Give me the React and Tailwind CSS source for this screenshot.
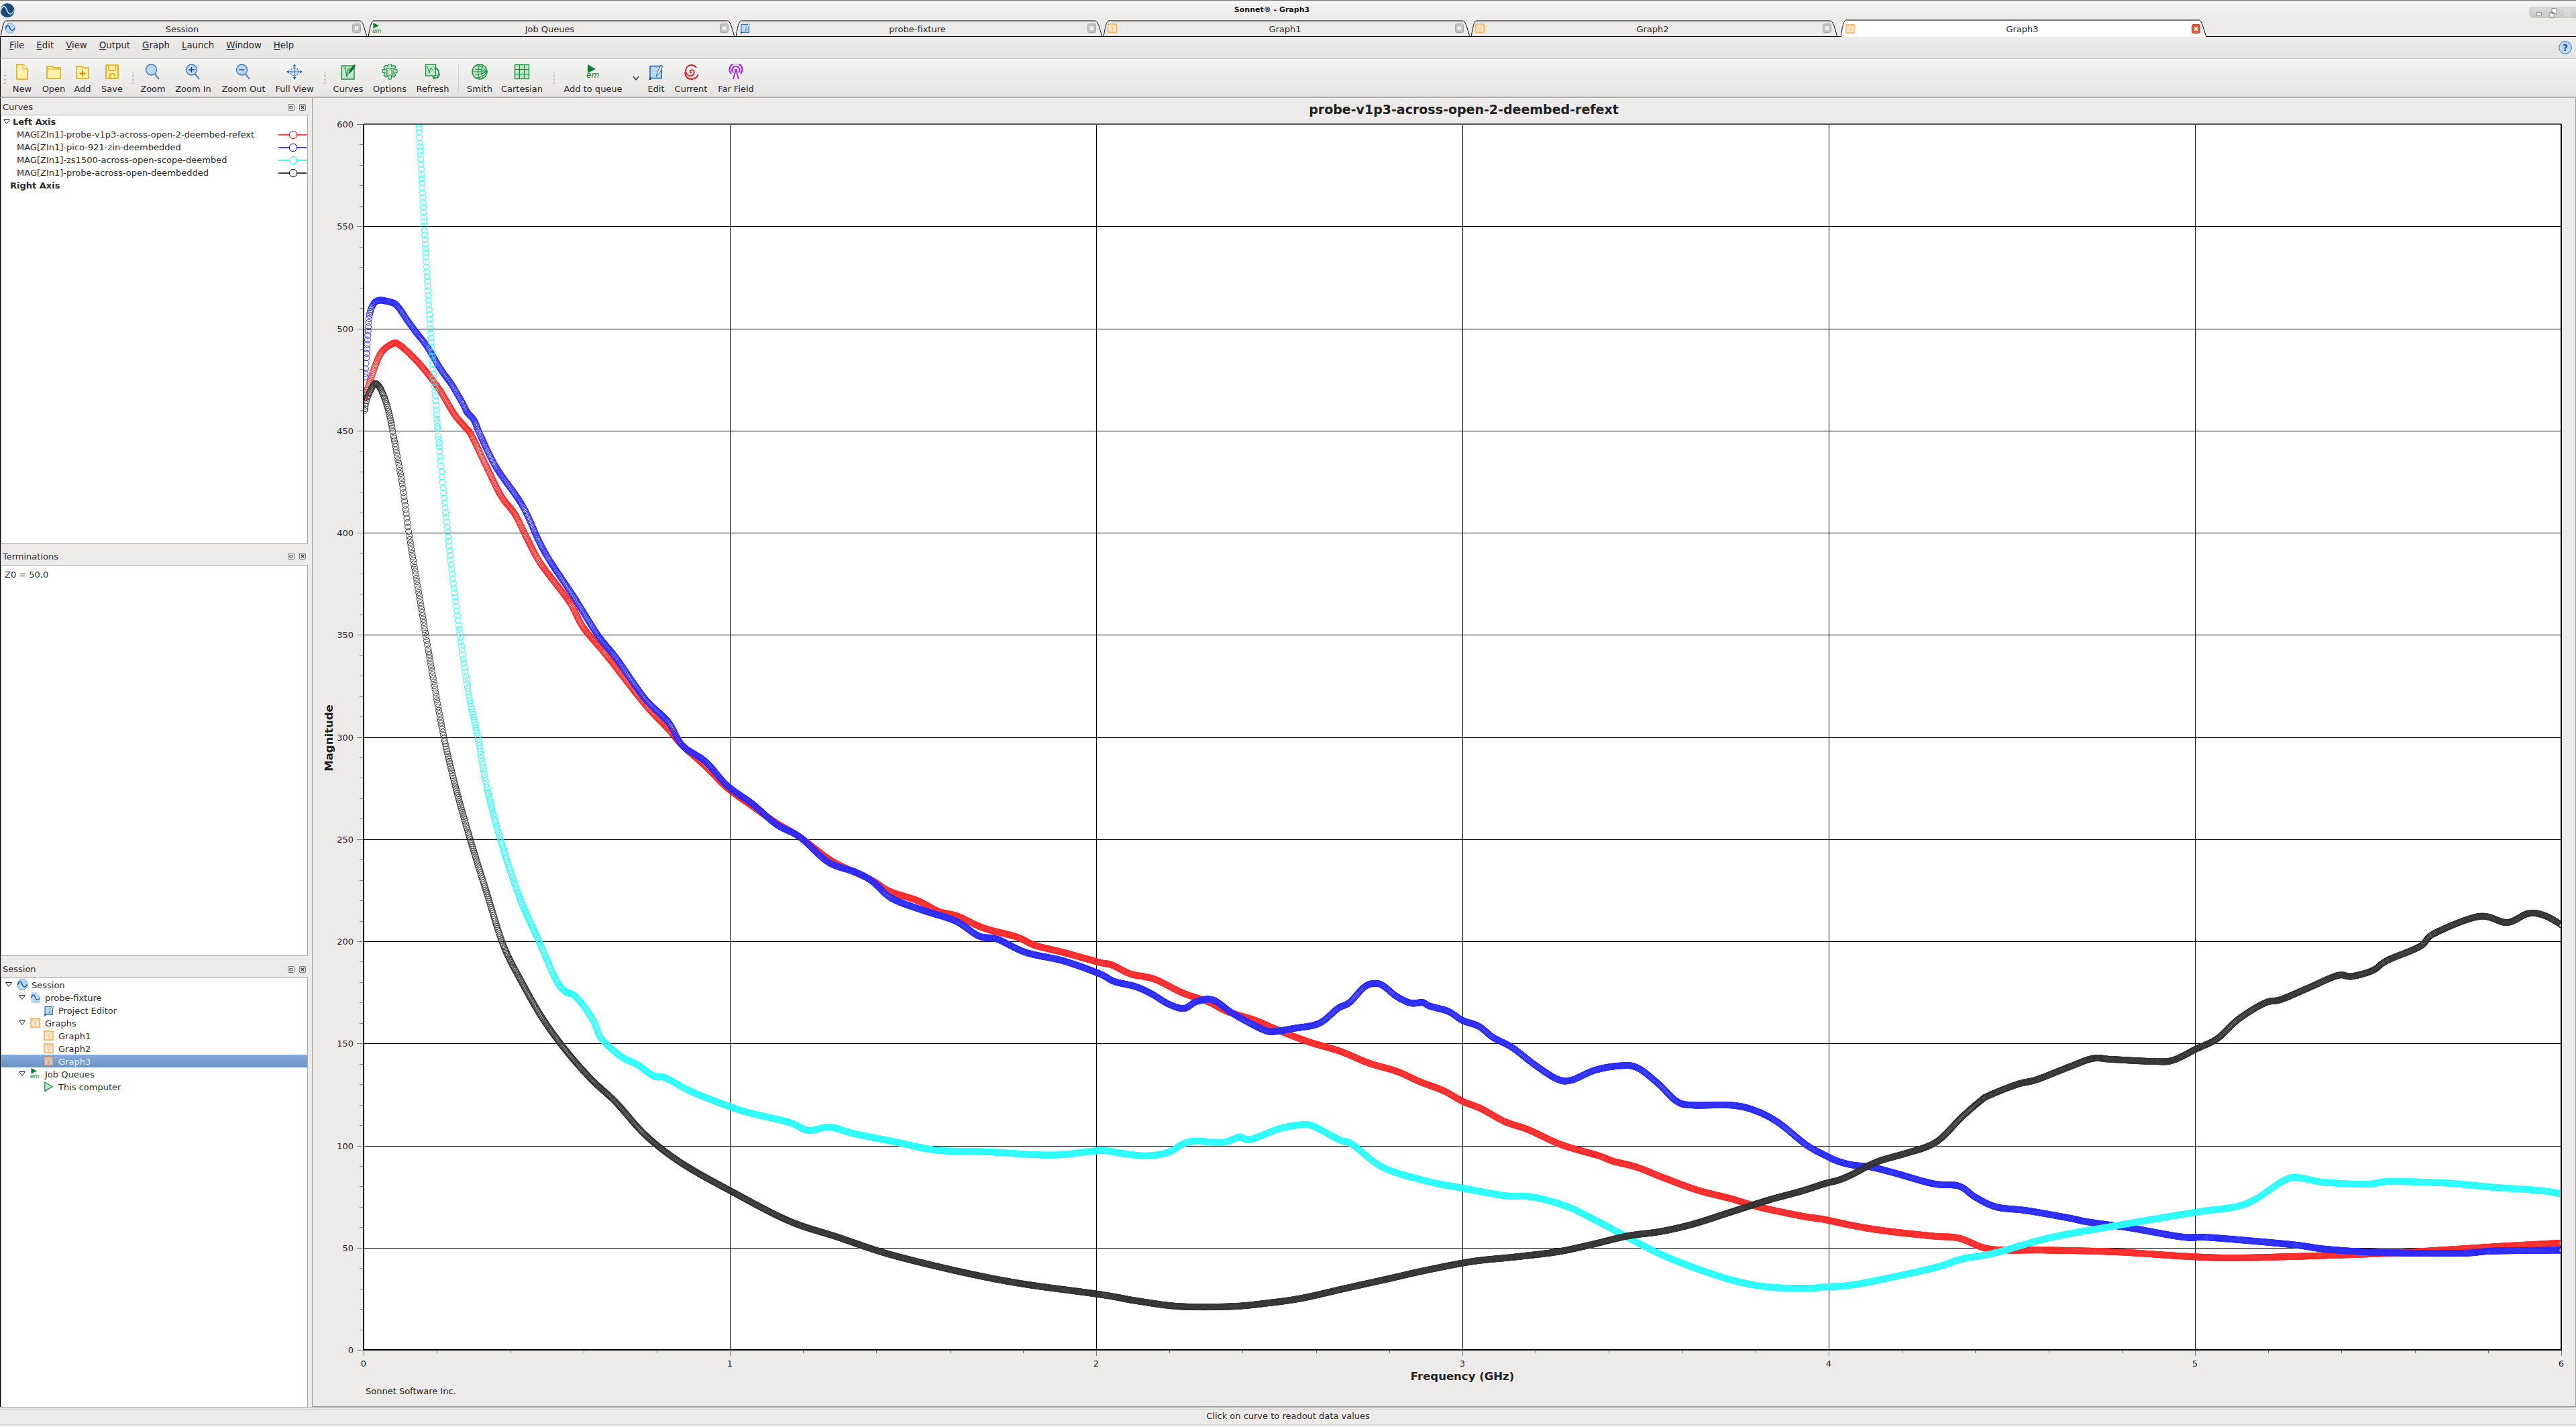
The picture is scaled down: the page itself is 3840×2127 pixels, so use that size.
import React from "react";

const z7 = (a) => a.map(([X, Y]) => [460 + X / 3, 150 + Y / 3]);
const z10 = (a) => a.map(([X, Y]) => [540 + X / 1.4255, 420 + Y / 1.4255]);
const z11 = (a) => a.map(([X, Y]) => [1640 + X / 1.4255, 1300 + Y / 2.24]);
const z12 = (a) => a.map(([X, Y]) => [2720 + X / 1.4255, 1300 + Y / 2.24]);
const ov = (a) => a.map(([X, Y]) => [X * 2.449, Y * 2.449]);

const RED = [
  ...z7([[247,1335],[270,1270],[300,1180],[330,1120],[380,1085],[410,1095],[460,1140],[520,1205],[590,1300],[650,1400],[700,1460],[730,1500]]),
  ...z10([[265,395],[295,455],[325,495],[350,545],[380,600],[440,680],[470,735],[520,795],[600,897],[650,950],[680,985],[730,1030],[775,1075],[830,1115],[880,1150],[930,1180],[1000,1232],[1080,1270],[1120,1295],[1180,1315],[1225,1338],[1265,1348],[1320,1373],[1390,1392],[1430,1410],[1490,1425],[1566,1446]]),
  ...z11([[25,310],[65,340],[115,357],[175,403],[230,433],[270,465],[330,495],[370,522],[440,565],[510,598],[570,637],[630,665],[680,700],[730,730],[770,765],[810,790],[860,833],[910,860],[980,910],[1060,947],[1090,965],[1140,985],[1200,1022],[1270,1062],[1340,1090],[1400,1118],[1490,1148]]),
  ...z12([[0,1160],[60,1180],[130,1198],[230,1215],[285,1222],[340,1255],[390,1262],[470,1262],[620,1268],[760,1282],[860,1288],[980,1284],[1060,1280],[1200,1272],[1350,1258],[1450,1248],[1568,1238]]),
];
const BLUE = [
  ...z7([[252,1235],[258,1150],[265,1050],[272,960],[290,910],[315,893],[350,897],[385,908],[410,935],[440,980],[480,1035],[530,1100],[590,1200],[640,1270],[690,1355],[710,1395],[740,1430],[770,1500]]),
  ...z10([[285,395],[340,475],[375,550],[400,595],[450,670],[500,750],[540,800],[600,885],[650,935],[680,985],[730,1020],[775,1070],[830,1110],[880,1153],[930,1180],[990,1233],[1050,1255],[1085,1275],[1125,1310],[1190,1335],[1260,1358],[1310,1390],[1350,1397],[1410,1425],[1490,1443],[1566,1470]]),
  ...z11([[30,365],[75,382],[110,407],[145,440],[178,455],[205,432],[240,427],[285,475],[345,525],[370,532],[410,522],[465,505],[505,455],[530,435],[560,385],[580,372],[600,378],[630,415],[660,437],[685,435],[700,447],[740,465],[770,495],[805,515],[835,552],[875,585],[925,645],[970,690],[1000,695],[1050,662],[1100,647],[1140,652],[1185,705],[1225,765],[1260,778],[1340,778],[1390,795],[1440,835],[1500,910],[1540,945]]),
  ...z12([[28,965],[60,978],[100,985],[150,1005],[230,1040],[285,1048],[320,1085],[365,1118],[430,1130],[520,1155],[560,1168],[650,1188],[760,1218],[820,1220],[990,1243],[1060,1258],[1150,1268],[1250,1272],[1360,1272],[1420,1265],[1568,1262]]),
];
const CYAN = [
  ...z7([[491,60],[493,105],[497,190],[505,330],[515,520],[525,700],[535,870],[545,1020],[555,1180],[565,1300],[575,1440],[580,1500]]),
  ...z10([[175,470],[190,610],[205,730],[225,870],[245,965],[265,1075],[295,1190],[335,1310],[375,1400],[410,1480],[430,1507],[455,1520],[490,1568]]),
  ...ov([[366,632],[378,643],[388,648],[398,655],[405,656],[420,664],[440,672],[455,677],[480,683],[492,688],[505,686],[520,690],[545,695],[570,700],[600,701],[640,703]]),
  ...z11([[0,930],[50,940],[100,947],[145,935],[190,900],[260,902],[295,885],[320,892],[380,857],[430,843],[455,850],[510,895],[535,908],[600,985],[690,1030],[770,1055],[860,1080],[920,1085],[990,1115],[1050,1160],[1110,1210],[1190,1275],[1270,1325],[1350,1365],[1420,1385],[1500,1390]]),
  ...z12([[0,1385],[60,1378],[150,1350],[240,1318],[290,1292],[360,1272],[480,1220],[620,1180],[790,1135],[870,1118],[915,1092],[975,1030],[1005,1020],[1060,1035],[1150,1042],[1200,1033],[1320,1038],[1420,1052],[1520,1063],[1568,1075]]),
];
const BLACK = [
  ...z7([[250,1385],[262,1330],[285,1280],[300,1265],[320,1285],[345,1345],[365,1420],[380,1500]]),
  ...z10([[85,430],[100,540],[120,660],[140,780],[170,950],[195,1060],[225,1170],[265,1300],[300,1410],[340,1490],[385,1568]]),
  ...ov([[345,640],[360,657],[375,671],[393,691],[415,708],[445,725],[480,743],[510,753],[540,763],[580,773],[620,781]]),
  ...z11([[0,1410],[80,1432],[170,1450],[280,1450],[360,1438],[430,1422],[520,1390],[620,1355],[690,1330],[790,1300],[880,1285],[970,1268],[1040,1245],[1120,1215],[1190,1200],[1260,1175],[1340,1135],[1420,1095],[1490,1065]]),
  ...z12([[0,1040],[30,1028],[60,1008],[110,968],[170,940],[220,915],[250,885],[290,820],[330,765],[350,745],[410,708],[450,693],[520,650],[570,622],[610,625],[700,632],[740,628],[790,590],[835,555],[880,490],[935,437],[970,425],[1030,385],[1090,345],[1120,348],[1165,328],[1195,295],[1265,248],[1295,205],[1390,148],[1450,168],[1495,138],[1530,145],[1568,178]]),
];

const R = 4.5;
function ringPath(pts) {
  const p = [];
  for (const q of pts) if (!p.length || q[0] > p[p.length - 1][0] + 0.5) p.push(q);
  let d = "";
  for (let i = 0; i < p.length - 1; i++) {
    const a = p[Math.max(i - 1, 0)], b = p[i], c = p[i + 1], e = p[Math.min(i + 2, p.length - 1)];
    const dx = c[0] - b[0], len = Math.hypot(dx, c[1] - b[1]);
    const n = Math.max(1, Math.ceil(dx / 0.9), Math.ceil(len / 7.2));
    for (let k = 0; k < n; k++) {
      const t = k / n, t2 = t * t, t3 = t2 * t;
      const f = (j) => 0.5 * (2 * b[j] + (c[j] - a[j]) * t + (2 * a[j] - 5 * b[j] + 4 * c[j] - e[j]) * t2 + (3 * b[j] - a[j] - 3 * c[j] + e[j]) * t3);
      d += `M${(f(0) - R).toFixed(2)} ${f(1).toFixed(2)}a${R} ${R} 0 1 0 ${2 * R} 0a${R} ${R} 0 1 0 ${-2 * R} 0`;
    }
  }
  return d;
}

const CURVES = [
  { color: "#ff2a2a", pts: RED, d: ringPath(RED) },
  { color: "#2a2aff", pts: BLUE, d: ringPath(BLUE) },
  { color: "#2affff", pts: CYAN, d: ringPath(CYAN) },
  { color: "#333333", pts: BLACK, d: ringPath(BLACK) },
];

const X0 = 542, X1 = 3818, Y0 = 2012, Y1 = 185;
const px = (g) => X0 + (g * (X1 - X0)) / 6;
const py = (v) => Y0 - (v * (Y0 - Y1)) / 600;
const crisp = (n) => Math.round(n) + 0.5;

function Chart() {
  const yMinor = Array.from({ length: 61 }, (_, i) => i * 10);
  const xMinor = Array.from({ length: 31 }, (_, i) => i * 0.2);
  return (
    <svg width="3372" height="1951" viewBox="466 146 3372 1951" className="block">
      <text x="2182" y="170" textAnchor="middle" fontWeight="700" fontSize="19" fill="#222">probe-v1p3-across-open-2-deembed-refext</text>
      <rect x={X0} y={Y1} width={X1 - X0} height={Y0 - Y1} fill="#ffffff" />
      {[50,100,150,200,250,300,350,400,450,500,550].map((v) => (
        <line key={v} x1={X0} x2={X1} y1={crisp(py(v))} y2={crisp(py(v))} stroke="#000" strokeWidth="1" />
      ))}
      {[1,2,3,4,5].map((g) => (
        <line key={g} x1={crisp(px(g))} x2={crisp(px(g))} y1={Y1} y2={Y0} stroke="#000" strokeWidth="1" />
      ))}
      <defs>
        <clipPath id="plot"><rect x={X0} y={Y1} width={X1 - X0} height={Y0 - Y1} /></clipPath>
      </defs>
      <g clipPath="url(#plot)">
        {CURVES.map((c) => (
          <g key={c.color}>
            <path d={c.d} fill="none" stroke={c.color} strokeWidth="1" />
            <circle cx={c.pts[c.pts.length - 1][0] - 1} cy={c.pts[c.pts.length - 1][1]} r={R - 0.5} fill="#fff" stroke={c.color} strokeWidth="1" />
          </g>
        ))}
      </g>
      {yMinor.map((v) => {
        const major = v % 50 === 0;
        return <line key={v} x1={X0 - (major ? 10 : 6)} x2={X0} y1={crisp(py(v))} y2={crisp(py(v))} stroke="#777" strokeWidth="1" />;
      })}
      {xMinor.map((g, i) => {
        const major = i % 5 === 0;
        return <line key={i} x1={crisp(px(g))} x2={crisp(px(g))} y1={Y0} y2={Y0 + (major ? 9 : 5)} stroke="#777" strokeWidth="1" />;
      })}
      <line x1={X0} x2={X1} y1={Y1} y2={Y1} stroke="#555" strokeWidth="2" />
      <line x1={X0} x2={X0} y1={Y1} y2={Y0 + 1} stroke="#000" strokeWidth="2" />
      <line x1={X0} x2={X1 + 1} y1={Y0} y2={Y0} stroke="#000" strokeWidth="2" />
      <line x1={X1} x2={X1} y1={Y1} y2={Y0 + 1} stroke="#000" strokeWidth="2" />
      {[0,50,100,150,200,250,300,350,400,450,500,550,600].map((v) => (
        <text key={v} x="527" y={py(v) + 5} textAnchor="end" fontSize="13" fill="#222">{v}</text>
      ))}
      {[0,1,2,3,4,5,6].map((g) => (
        <text key={g} x={px(g)} y="2037" textAnchor="middle" fontSize="13" fill="#222">{g}</text>
      ))}
      <text x="2180" y="2057" textAnchor="middle" fontWeight="700" fontSize="16.5" fill="#222">Frequency (GHz)</text>
      <text x="0" y="0" transform="translate(496 1100) rotate(-90)" textAnchor="middle" fontWeight="700" fontSize="16.5" fill="#222">Magnitude</text>
      <text x="545" y="2078" fontSize="13" fill="#222">Sonnet Software Inc.</text>
    </svg>
  );
}

const Sine = ({ stroke = "#1d4f86", w = 2 }) => <path d="M2 13C5 4 8 4 11 11s6 9 11 1" fill="none" stroke={stroke} strokeWidth={w} />;
const Svg = ({ s = 24, children, vb = "0 0 24 24" }) => <svg width={s} height={s} viewBox={vb} className="block shrink-0">{children}</svg>;

const LogoDark = () => (
  <svg width="22" height="23" viewBox="0 0 24 24" className="block"><circle cx="12" cy="12" r="11.5" fill="#1c4a7a" /><path d="M1 13C4 3 8 3 11 11s7 10 12 1" fill="none" stroke="#e6eef7" strokeWidth="1.6" /></svg>
);
const LogoLight = ({ s = 17 }) => <Svg s={s}><circle cx="12" cy="12" r="11" fill="#b9d7f7" stroke="#5b8fc9" strokeWidth="1.2" /><Sine /></Svg>;
const DocSine = ({ s = 17 }) => <Svg s={s}><path d="M3 1h12l6 6v16H3z" fill="#b9d7f7" stroke="#9dc0e8" /><Sine /></Svg>;
const EmIcon = ({ s = 17 }) => (
  <Svg s={s}>
    <path d="M2 0L14 6L2 12z" fill="#0d7a33" />
    <text x="0" y="20.500" fontSize="12" fontStyle="italic" fill="#0d7a33">em</text>
  </Svg>
);
const PencilBox = ({ s = 17 }) => (
  <Svg s={s}>
    <rect x="3" y="3.5" width="17" height="18" fill="#b9d7f7" stroke="#1f5b9e" strokeWidth="1.5" />
    <path d="M12 19L15 10l4-8 3 1.5-4 9z" fill="#fff" stroke="#1f5b9e" />
    <path d="M3 19v4.5M1 22l2 2 2-2" fill="none" stroke="#222" strokeWidth="1" />
  </Svg>
);
const GraphIcon = ({ s = 17, dim }) => (
  <Svg s={s}>
    <rect x="1.5" y="1.5" width="21" height="21" fill={dim ? "#d9c8b8" : "#ffe9d2"} stroke={dim ? "#c08a5a" : "#ff9c2a"} strokeWidth="2" />
    <path d="M5 5c3 0 4 1 5 3s1 11 2 11 1-9 2-11 2-3 5-3" fill="none" stroke={dim ? "#b89878" : "#ffb469"} strokeWidth="1.5" />
  </Svg>
);
const PlayOutline = ({ s = 17 }) => <Svg s={s}><path d="M3 2L21 12L3 23z" fill="#c4e8cc" stroke="#158a3b" strokeWidth="2" /></Svg>;
const TreeArrow = () => <svg width="10" height="7" viewBox="0 0 10 7" className="block"><path d="M.5.5h9L5 6.5z" fill="#fff" stroke="#222" /></svg>;

const Close = ({ active }) => (
  <svg width="13" height="14" viewBox="0 0 13 14" className="block shrink-0">
    <rect x=".5" y=".5" width="12" height="13" rx="2" fill={active ? "#e05a3c" : "#c2c2c0"} stroke={active ? "#c9402a" : "#a8a8a8"} />
    <path d="M4 4.5l5 5M9 4.5l-5 5" stroke="#fff" strokeWidth="2" />
  </svg>
);

const TABS = [
  { label: "Session", icon: <LogoLight s={16} /> },
  { label: "Job Queues", icon: <EmIcon s={17} /> },
  { label: "probe-fixture", icon: <PencilBox s={16} /> },
  { label: "Graph1", icon: <GraphIcon s={14} /> },
  { label: "Graph2", icon: <GraphIcon s={14} /> },
];

function Tab({ label, icon }) {
  return (
    <div className="relative h-[24px] w-[548px] flex items-center pl-[7px] pr-[10px]">
      <svg width="548" height="25" viewBox="0 0 548 25" className="absolute left-0 top-0">
        <path d="M1 25C3 14 5 1 9 1H536C541 1 543 12 547 25" fill="none" stroke="#000" strokeWidth="1" />
      </svg>
      <span className="w-[17px] shrink-0 flex">{icon}</span>
      <span className="flex-1 text-center pr-[6px] pt-[2px]">{label}</span>
      <Close />
    </div>
  );
}

function ActiveTab() {
  return (
    <div className="relative ml-[4px] h-[25px] w-[545px] flex items-center pl-[7px] pr-[9px] z-10">
      <svg width="545" height="26" viewBox="0 0 545 26" className="absolute left-0 -top-px">
        <path d="M0 26C2 14 4 1 8 1H534C538 1 540 12 545 26" fill="#fff" />
        <path d="M0 26C2 14 4 1 8 1H534C538 1 540 12 545 26" fill="none" stroke="#000" strokeWidth="1" />
      </svg>
      <span className="relative w-[17px] shrink-0 flex"><GraphIcon s={14} /></span>
      <span className="relative flex-1 text-center pr-[6px] pt-[1px]">Graph3</span>
      <span className="relative"><Close active /></span>
    </div>
  );
}

const y = { s: "#dfa500", f: "#fff3ab" };
const g = { s: "#15893b", f: "#bfe6c8" };
const Mag = ({ sign }) => (
  <Svg>
    <path d="M15 15l6 8" stroke="#6c8db5" strokeWidth="2.5" />
    <circle cx="9.5" cy="9" r="8" fill="#b9d7f7" stroke="#2d6cb0" strokeWidth="1.3" />
    {sign && <path d={sign === "+" ? "M5.5 9h8M9.5 5v8" : "M5.5 9h8"} stroke="#123a66" strokeWidth="1.3" />}
  </Svg>
);
const ICONS = {
  New: <Svg><path d="M4 1h9l7 7v15H4z" fill={y.f} stroke={y.s} strokeWidth="1.4" /><path d="M13 1v7h7" fill="#fff8cf" stroke={y.s} /></Svg>,
  Open: <Svg><path d="M2 6V4h8l2 2h10v16H2z" fill={y.f} stroke={y.s} strokeWidth="1.4" /><path d="M2 8h20" stroke={y.s} /></Svg>,
  Add: <Svg><path d="M3 6V4h7l2 2h9v16H3z" fill={y.f} stroke={y.s} strokeWidth="1.4" /><path d="M12 10v9M7.5 14.500h9" stroke="#d18a00" strokeWidth="2" /></Svg>,
  Save: <Svg><path d="M3 2h18v20H3z" fill={y.f} stroke={y.s} strokeWidth="1.6" /><path d="M7 2v8h10V2M8 22v-7h8v7M10 16v6" fill="none" stroke={y.s} strokeWidth="1.3" /></Svg>,
  Zoom: <Mag />,
  "Zoom In": <Mag sign="+" />,
  "Zoom Out": <Mag sign="-" />,
  "Full View": (
    <Svg>
      <circle cx="12" cy="12" r="6" fill="#cfe3f9" stroke="#2d6cb0" strokeWidth="1.2" strokeDasharray="2 1.500" />
      <path d="M12 1v22M1 12h22" stroke="#2d6cb0" strokeWidth="1" />
      <path d="M12 0l-2.500 4h5zM12 24l-2.500-4h5zM0 12l4-2.500v5zM24 12l-4-2.500v5z" fill="#2d6cb0" />
    </Svg>
  ),
  Curves: (
    <Svg>
      <rect x="2" y="3" width="19" height="20" fill={g.f} stroke={g.s} strokeWidth="1.4" />
      <path d="M5 6h3l2 14 2-12 6-1" fill="none" stroke={g.s} strokeWidth="1.2" />
      <path d="M12 16l2-7 7-8 2 1.500-6 9z" fill="#0f6e2e" />
    </Svg>
  ),
  Options: (
    <Svg>
      <path d="M10 0h4l1 4 3-2 3 3-2 3 4 1v4l-4 1 2 3-3 3-3-2-1 5h-4l-1-5-3 2-3-3 2-3-4-1V9l4-1-2-3 3-3 3 2z" fill={g.f} stroke={g.s} strokeWidth="1.200" />
      <rect x="7" y="7" width="10" height="10" fill="#e3f4e6" stroke={g.s} />
      <path d="M9 9v6M12 9h3v6" fill="none" stroke={g.s} />
    </Svg>
  ),
  Refresh: (
    <Svg>
      <rect x="1.500" y="1" width="15" height="17" fill={g.f} stroke={g.s} strokeWidth="1.300" />
      <path d="M4 4l3 10 2-8 3 3" fill="none" stroke={g.s} />
      <path d="M15 6c5 1 7 6 6 11M21 19c-3 3-6 3-8 1" fill="none" stroke={g.s} strokeWidth="1.800" />
      <path d="M18 16l3 3 2-4M14 23l-2-4 4-1" fill="none" stroke={g.s} strokeWidth="1.200" />
    </Svg>
  ),
  Smith: (
    <Svg>
      <circle cx="12" cy="12" r="11" fill={g.f} stroke={g.s} strokeWidth="1.400" />
      <path d="M1 12h22M23 12c-6-7-10-9-16-9M23 12c-6 7-10 9-16 9M23 12c-8-3-12-5-18-3M23 12c-8 3-12 5-18 3M12 2c-3 6-3 14 0 20M17 3c-3 5-3 13 0 18" fill="none" stroke={g.s} strokeWidth="1" />
    </Svg>
  ),
  Cartesian: (
    <Svg>
      <rect x="1.500" y="1.500" width="21" height="21" fill={g.f} stroke={g.s} strokeWidth="1.300" />
      <path d="M8.500 1.500v21M15.500 1.500v21M1.500 8.500h21M1.500 15.500h21" stroke={g.s} strokeWidth="1.200" />
    </Svg>
  ),
  "Add to queue": (
    <Svg>
      <path d="M4 1L16 8L4 14z" fill="#0d7a33" />
      <text x="2" y="21" fontSize="12" fontStyle="italic" fill="#0d7a33">em</text>
    </Svg>
  ),
  Edit: <PencilBox s={24} />,
  Current: (
    <Svg>
      <path d="M13 13c-1.500 1-3-.5-2.500-2 1-2.500 4-2.500 5.500-.5 2 3-.5 7-4 7.500-4.500.5-8-3-8-7.500C4 5.500 8 2 12 2s7 2 8 4M3 13c0 6 4 10 10 10 5 0 8-3 10-7" fill="none" stroke="#d71920" strokeWidth="1.800" />
    </Svg>
  ),
  "Far Field": (
    <Svg>
      <path d="M5 15a9.500 9.500 0 1 1 14 0M8 13a5.500 5.500 0 1 1 8 0" fill="none" stroke="#a020f0" strokeWidth="2.200" />
      <circle cx="12" cy="9.500" r="2" fill="#a020f0" />
      <path d="M12 9L8 23M12 9l4 14" stroke="#a020f0" strokeWidth="1.800" />
    </Svg>
  ),
};

const Grip = ({ w }) => (
  <div className={`${w} flex justify-center pt-[20px]`}>
    <div className="w-[3px] h-[17px] border-x border-dotted border-[#b5b5b5]" />
  </div>
);
const Tool = ({ name, w }) => (
  <div className={`${w} flex flex-col items-center pt-[7px]`}>
    {ICONS[name]}
    <span className="mt-[6px] leading-[16px] whitespace-nowrap">{name}</span>
  </div>
);

const MENU = ["File", "Edit", "View", "Output", "Graph", "Launch", "Window", "Help"];

const DockHead = ({ title, h, top }) => (
  <div className={`${h} ${top} flex items-center justify-between pl-[3px] pr-[9px]`}>
    <span>{title}</span>
    <span className="flex gap-[7px]">
      <svg width="10" height="10" viewBox="0 0 10 10" className="block"><rect x=".5" y=".5" width="9" height="9" rx="1" fill="none" stroke="#777" /><path d="M3 3.500h4v3.500H3zM3.500 5.500H2" fill="none" stroke="#555" /></svg>
      <svg width="10" height="10" viewBox="0 0 10 10" className="block"><rect x=".5" y=".5" width="9" height="9" rx="1" fill="none" stroke="#777" /><path d="M2.500 2.500l5 5M7.500 2.500l-5 5" stroke="#333" strokeWidth="1.300" /></svg>
    </span>
  </div>
);

const LEGEND = [
  ["MAG[ZIn1]-probe-v1p3-across-open-2-deembed-refext", "#ff0000"],
  ["MAG[ZIn1]-pico-921-zin-deembedded", "#0000ff"],
  ["MAG[ZIn1]-zs1500-across-open-scope-deembed", "#00ffff"],
  ["MAG[ZIn1]-probe-across-open-deembedded", "#000000"],
];

const Swatch = ({ c }) => (
  <svg width="42" height="14" viewBox="0 0 42 14" className="block">
    <path d="M0 7h42" stroke={c} strokeWidth="1.300" />
    <circle cx="22" cy="7" r="5.700" fill="#fff" stroke={c} strokeWidth="1" />
  </svg>
);

const TreeRow = ({ pad = "", arrow, icon, label, selected }) => (
  <div className={`h-[19px] flex items-center ${pad} ${selected ? "bg-gradient-to-b from-[#83abdb] to-[#6a92c6] text-[#f2f2f2]" : ""}`}>
    <span className="w-[22px] flex justify-center">{arrow && <TreeArrow />}</span>
    <span className="w-[22px] flex pl-px">{icon}</span>
    <span className="pl-[1px] pt-px whitespace-nowrap">{label}</span>
  </div>
);

export default function App() {
  return (
    <div className="w-[3840px] h-[2127px] flex flex-col overflow-hidden bg-[#ecebe9] text-[#2a2a2a] text-[13px] leading-[19px] font-['DejaVu_Sans',sans-serif]">
      <div className="h-[30px] shrink-0 flex items-start border-t border-[#777] bg-gradient-to-b from-[#f4f4f4] to-[#ecebe9]">
        <div className="pt-[3px]"><LogoDark /></div>
        <div className="flex-1 text-center text-[11px] font-bold text-[#111] pt-[4px]">Sonnet® - Graph3</div>
        <div className="w-[70px] h-[17px] mt-[9px] rounded-bl-[6px] bg-gradient-to-b from-[#dadada] to-[#c9c9c9] flex items-center justify-around pl-[6px] pr-[2px]">
          <svg width="8" height="5" viewBox="0 0 8 5" className="block mt-[4px]"><rect x=".5" y=".5" width="7" height="4" fill="#fff" stroke="#888" /></svg>
          <svg width="12" height="14" viewBox="0 0 12 14" className="block"><path d="M4 .5h7v8H4zM1 6.500h6v7H1z" fill="#fff" stroke="#888" /></svg>
          <svg width="10" height="14" viewBox="0 0 10 14" className="block"><path d="M1 1l8 12M9 1L1 13" stroke="#fff" strokeWidth="2.200" /><path d="M1 1l8 12M9 1L1 13" stroke="#888" strokeWidth=".6" /></svg>
        </div>
      </div>

      <div className="h-[25px] shrink-0 flex items-start border-b border-black bg-[#ecebe9]">
        {TABS.map((t) => <Tab key={t.label} {...t} />)}
        <ActiveTab />
      </div>

      <div className="h-[33px] shrink-0 flex items-center pl-[13px] pb-[7px] gap-[18px] pr-[6px] text-[13.33px] border-b border-[#c4c4c2] border-l border-l-black bg-gradient-to-b from-[#ecebe9] to-[#e6e5e3]">
        {MENU.map((m) => (
          <span key={m}><span className="underline">{m[0]}</span>{m.slice(1)}</span>
        ))}
        <svg width="20" height="20" viewBox="0 0 20 20" className="block ml-auto mt-[7px]">
          <circle cx="10" cy="10" r="9.300" fill="#b9d7f7" stroke="#2d6cb0" />
          <text x="10" y="15" textAnchor="middle" fontSize="14" fontWeight="700" fill="#1d4f86">?</text>
        </svg>
      </div>

      <div className="h-[58px] shrink-0 flex border-b-2 border-[#b0b0ae] border-l border-l-black bg-gradient-to-b from-[#f4f4f2] to-[#e5e4e2]">
        <Grip w="w-[13px]" />
        <Tool name="New" w="w-[38px]" />
        <Tool name="Open" w="w-[56px]" />
        <Tool name="Add" w="w-[30px]" />
        <Tool name="Save" w="w-[58px]" />
        <Grip w="w-[4px]" />
        <Tool name="Zoom" w="w-[56px]" />
        <Tool name="Zoom In" w="w-[64px]" />
        <Tool name="Zoom Out" w="w-[86px]" />
        <Tool name="Full View" w="w-[66px]" />
        <Grip w="w-[24px]" />
        <Tool name="Curves" w="w-[46px]" />
        <Tool name="Options" w="w-[78px]" />
        <Tool name="Refresh" w="w-[50px]" />
        <div className="w-[26px] flex justify-center pt-[7px] pb-[6px]"><div className="w-px bg-[#cfcfcd]" /></div>
        <Tool name="Smith" w="w-[38px]" />
        <Tool name="Cartesian" w="w-[88px]" />
        <Grip w="w-[6px]" />
        <Tool name="Add to queue" w="w-[112px]" />
        <div className="w-[16px] flex justify-center pt-[25px]">
          <svg width="10" height="7" viewBox="0 0 10 7" className="block"><path d="M1 1l4 5 4-5" fill="none" stroke="#222" strokeWidth="1.300" /></svg>
        </div>
        <Tool name="Edit" w="w-[44px]" />
        <Tool name="Current" w="w-[60px]" />
        <Tool name="Far Field" w="w-[74px]" />
      </div>

      <div className="flex-1 flex min-h-0 border-x border-l-black border-r-[#999]">
        <div className="w-[464px] shrink-0 flex flex-col">
          <DockHead title="Curves" h="h-[25px]" top="pt-[2px]" />
          <div className="h-[640px] w-[458px] bg-white border border-[#aaa]">
            <div className="h-[19px] flex items-center pl-[3px] font-bold gap-[4px]"><TreeArrow /><span>Left Axis</span></div>
            {LEGEND.map(([t, c]) => (
              <div key={t} className="h-[19px] flex items-center justify-between pl-[23px] pr-px">
                <span>{t}</span>
                <Swatch c={c} />
              </div>
            ))}
            <div className="h-[19px] flex items-center pl-[13px] font-bold">Right Axis</div>
          </div>
          <DockHead title="Terminations" h="h-[31px]" top="pt-[5px]" />
          <div className="h-[583px] w-[458px] bg-white border border-[#aaa] pl-[5px] pt-[4px]">Z0 = 50.0</div>
          <DockHead title="Session" h="h-[32px]" top="pt-[7px]" />
          <div className="flex-1 w-[458px] bg-white border-x border-t border-[#aaa]">
            <TreeRow arrow icon={<LogoLight />} label="Session" />
            <TreeRow pad="pl-[20px]" arrow icon={<DocSine s={16} />} label="probe-fixture" />
            <TreeRow pad="pl-[40px]" icon={<PencilBox s={16} />} label="Project Editor" />
            <TreeRow pad="pl-[20px]" arrow icon={<GraphIcon s={15} />} label="Graphs" />
            <TreeRow pad="pl-[40px]" icon={<GraphIcon s={15} />} label="Graph1" />
            <TreeRow pad="pl-[40px]" icon={<GraphIcon s={15} />} label="Graph2" />
            <TreeRow pad="pl-[40px]" icon={<GraphIcon s={15} dim />} label="Graph3" selected />
            <TreeRow pad="pl-[20px]" arrow icon={<EmIcon s={17} />} label="Job Queues" />
            <TreeRow pad="pl-[40px]" icon={<PlayOutline s={15} />} label="This computer" />
          </div>
        </div>
        <div className="flex-1 min-w-0 border-l border-b border-[#999] overflow-hidden">
          <Chart />
        </div>
      </div>

      <div className="h-[30px] shrink-0 pt-[2px] pb-[3px] border-t border-[#aaa]">
        <div className="h-full flex items-center justify-center border-y border-[#cfcfcf] pb-[4px]">Click on curve to readout data values</div>
      </div>
    </div>
  );
}
